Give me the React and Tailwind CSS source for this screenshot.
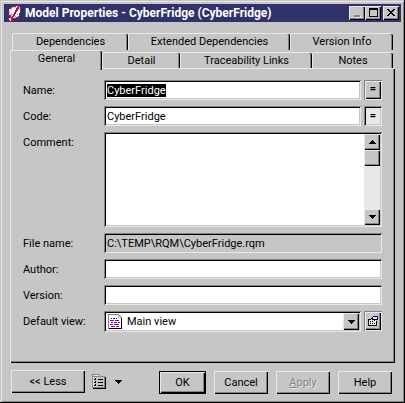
import {useEffect,useRef} from "react";

const raised = "bg-[#c6c6c6] shadow-[inset_1px_1px_#e8e8e8,inset_-1px_-1px_#000,inset_-2px_-2px_#848484]";
const sunken = "shadow-[inset_1px_1px_#848484,inset_-1px_-1px_#e8e8e8,inset_2px_2px_#000,inset_-2px_-2px_#c6c6c6]";
const tab = "border-t border-l border-[#e8e8e8] rounded-t-[2px] shadow-[inset_-1px_0_#000,inset_-2px_0_#848484] text-center";
const pushButton = "h-[23px] w-[54px] " + raised;

function QuillIcon(){
    return(
        <svg width="15" height="18" viewBox="0 0 15 18" shapeRendering="crispEdges" aria-hidden="true">
            <path d="M4 2h4V1h5v1h1v7h-1v3h-1v2h-2v1H5v-1H3v-2H1V5h1V4h1V3h1z" fill="#8c2050"/>
            <path d="M5 3h4V2h3v1h1v6h-1v3h-1v1H9v1H6v-1H4v-2H2V5h2V4h1z" fill="#d6ced6"/>
            <path d="M5 4h4v2H8v2H7v2H5V9H3V6h2zM11 6h2v3h-1v3h-1v1H8v-2h1V9h1z" fill="#fff"/>
            <path d="M12 1h1v2h-1v2h-1v2h-1v1H9v2H8v2H7v1H6v2H5v1H4v-2h1v-2h1v-2h1V8h1V6h1V4h1V3h1V2h1z" fill="#a5184a"/>
            <path d="M2 13h3v1h1v3H5v1H2v-1H1v-3h1z" fill="#a5184a"/>
            <path d="M2 14h2v2H2zM3 16h1v1H3z" fill="#f0d8e0"/>
            <path d="M2 8h1v1H2zM4 10h1v1H4zM10 10h1v1h-1zM8 12h1v1H8z" fill="#949494"/>
        </svg>
    );
}

function ViewIcon(){
    return(
        <svg width="15" height="16" viewBox="0 0 15 16" shapeRendering="crispEdges" aria-hidden="true">
            <path d="M0 0h11v1h1v1h1v1h1v12H0z" fill="#848484"/>
            <path d="M1 1h9v3h3v10H1z" fill="#fff"/>
            <path d="M10 1h1v1h1v1h1v1h-3z" fill="#c6c6c6"/>
            <path d="M13 4h1v11h-1zM1 14h13v1H1z" fill="#000"/>
            <path d="M3 4h1v1H3zM5 4h2v1H5zM8 4h1v1H8z" fill="#0000e0"/>
            <path d="M2 6h4v1H2zM7 6h4v1H7zM3 8h2v1H3zM6 8h3v1H6zM10 8h2v1h-2zM2 10h3v1H2zM6 10h5v1H6zM3 12h4v1H3zM8 12h3v1H8z" fill="#94009c"/>
        </svg>
    );
}

function PropertiesIcon(){
    return(
        <svg width="12" height="12" viewBox="0 0 12 12" shapeRendering="crispEdges" aria-hidden="true">
            <path d="M1 4h3v1H2v5h7V6h1v5H1z" fill="#000"/>
            <path d="M2 5h7v5H2z" fill="#e8e8e8"/>
            <path d="M3 6h1v1H3zM5 6h1v1H5zM3 8h1v1H3zM5 8h1v1H5zM7 8h1v1H7z" fill="#000"/>
            <path d="M5 2h1V1h4v1h1v3H8v1H7V5H5V4H4V3h1z" fill="#000"/>
            <path d="M6 2h4v2H6z" fill="#e8e8e8"/>
            <path d="M10 1h1v4h-1z" fill="#0000e0"/>
        </svg>
    );
}

function MenuIcon(){
    return(
        <svg width="14" height="15" viewBox="0 0 14 15" shapeRendering="crispEdges" aria-hidden="true">
            <path d="M0 0h7v1h1v1h5v12H0z" fill="#848484"/>
            <path d="M1 1h6v1H1zM1 3h11v10H1z" fill="#e8e8e8"/>
            <path d="M2 3h10v10H2z" fill="#c6c6c6"/>
            <path d="M13 3h1v12H1v-1h12z" fill="#000"/>
            <path d="M2 5h2v1H2zM3 4h1v1H3zM2 8h2v1H2zM3 7h1v1H3zM2 11h2v1H2zM3 10h1v1H3zM6 5h5v1H6zM6 8h5v1H6zM6 11h5v1H6z" fill="#000"/>
        </svg>
    );
}

function Arrow({up}){
    return(
        <svg width="7" height="4" viewBox="0 0 7 4" shapeRendering="crispEdges" aria-hidden="true">
            <path d={up ? "M3 0h1v1h1v1h1v1h1v1H0V3h1V2h1V1h1z" : "M0 0h7v1H6v1H5v1H4v1H3V3H2V2H1V1H0z"}/>
        </svg>
    );
}

function Field({label,id,children}){
    return(
        <div className="grid grid-cols-[81px_1fr]">
            <label htmlFor={id} className="mt-1 h-[14px]">{label}</label>
            <div className="flex gap-[3px]">{children}</div>
        </div>
    );
}

export default function App(){

    const nameRef = useRef(null);

    useEffect(()=>{
        nameRef.current.focus();
        nameRef.current.select();
    },[]);

    const input = "h-5 min-w-0 flex-1 px-[3px] outline-none selection:bg-black selection:text-white " + sunken;

    return(
        <div className="flex min-h-screen flex-col bg-[#c6c6c6] p-1 font-[Roboto,'Liberation_Sans',sans-serif] text-[11px] leading-[14px] text-black shadow-[inset_-1px_-1px_#000,inset_1px_1px_#c6c6c6,inset_2px_2px_#e8e8e8,inset_-2px_-2px_#848484]">

            {/* Title bar */}
            <div className="flex h-[18px] items-center bg-[#31316b] pr-[2px] pl-[3px] text-white">
                <QuillIcon/>
                <h1 className="ml-[3px] flex-1 truncate text-[12px] font-bold">Model Properties - CyberFridge (CyberFridge)</h1>
                <button aria-label="Minimize" disabled className={"flex h-[14px] w-4 items-end justify-center pb-[3px] "+raised}>
                    <span className="mr-px h-[2px] w-[6px] bg-[#848484] shadow-[1px_1px_#e8e8e8]"/>
                </button>
                <button aria-label="Maximize" className={"flex h-[14px] w-4 items-start justify-center pt-[2px] "+raised}>
                    <span className="h-[9px] w-[9px] border border-t-2 border-black"/>
                </button>
                <button aria-label="Close" className={"ml-[2px] flex h-[14px] w-4 items-start justify-center pt-[3px] "+raised}>
                    <svg width="8" height="7" viewBox="0 0 8 7" shapeRendering="crispEdges" aria-hidden="true">
                        <path d="M0 0h2v1h1v1h2V1h1V0h2v1H7v1H6v1H5v1h1v1h1v1h1v1H6V6H5V5H3v1H2v1H0V6h1V5h1V4h1V3H2V2H1V1H0z"/>
                    </svg>
                </button>
            </div>

            {/* Tabs */}
            <div role="tablist" className="mt-[11px] ml-[6px] mr-[6px]">
                <div className="mr-[2px] ml-[2px] grid h-[17px] grid-cols-[116fr_162fr_103fr]">
                    <button role="tab" className={tab}>Dependencies</button>
                    <button role="tab" className={tab}>Extended Dependencies</button>
                    <button role="tab" className={tab}>Version Info</button>
                </div>
                <div className="mr-[2px] grid h-[18px] grid-cols-[92fr_78fr_132fr_81fr] items-end">
                    <button role="tab" aria-selected="true" className={"relative -mb-px h-[20px] bg-[#c6c6c6] pb-[3px] "+tab}>General</button>
                    <button role="tab" className={"h-[17px] "+tab}>Detail</button>
                    <button role="tab" className={"h-[17px] "+tab}>Traceability Links</button>
                    <button role="tab" className={"h-[17px] "+tab}>Notes</button>
                </div>
            </div>

            {/* General page */}
            <div role="tabpanel" className="mx-[6px] flex flex-1 flex-col gap-[6px] pt-3 pr-[13px] pb-[30px] pl-[13px] shadow-[inset_1px_1px_#e8e8e8,inset_-1px_-1px_#000,inset_-2px_-2px_#848484]">

                <Field label="Name:" id="name">
                    <input id="name" ref={nameRef} defaultValue="CyberFridge" className={"bg-white "+input}/>
                    <button aria-label="Name equals code" className="h-5 w-[18px] bg-[#e8e8e8] p-px shadow-[inset_1px_1px_#848484]">
                        <span className={"block h-full pt-px font-bold "+raised}>=</span>
                    </button>
                </Field>

                <Field label="Code:" id="code">
                    <input id="code" defaultValue="CyberFridge" className={"bg-white "+input}/>
                    <button aria-label="Code equals name" aria-pressed="true" className={"h-5 w-[18px] bg-[#e8e8e8] font-bold "+sunken}>=</button>
                </Field>

                <Field label="Comment:" id="comment">
                    <div className={"flex h-[95px] flex-1 bg-white p-[2px] "+sunken}>
                        <textarea id="comment" className="min-w-0 flex-1 resize-none overflow-hidden px-px outline-none"/>
                        <div className="flex w-4 flex-col bg-[#e8e8e8]">
                            <button aria-label="Scroll up" className={"flex h-4 items-center justify-center "+raised}><Arrow up/></button>
                            <div className={"h-4 "+raised}/>
                            <button aria-label="Scroll down" className={"mt-auto flex h-4 items-center justify-center "+raised}><Arrow/></button>
                        </div>
                    </div>
                </Field>

                <Field label="File name:" id="file">
                    <input id="file" readOnly defaultValue="C:\TEMP\RQM\CyberFridge.rqm" className={"bg-[#c6c6c6] "+input}/>
                </Field>

                <Field label="Author:" id="author">
                    <input id="author" className={"bg-white "+input}/>
                </Field>

                <Field label="Version:" id="version">
                    <input id="version" className={"bg-white "+input}/>
                </Field>

                <Field label="Default view:" id="view">
                    <div className="relative flex-1">
                        <select id="view" className={"h-[21px] w-full appearance-none bg-white pl-[23px] outline-none "+sunken}>
                            <option>Main view</option>
                        </select>
                        <span className="pointer-events-none absolute top-[3px] left-1"><ViewIcon/></span>
                        <span className={"pointer-events-none absolute top-[2px] right-[2px] flex h-[17px] w-4 items-center justify-center "+raised}><Arrow/></span>
                    </div>
                    <button aria-label="View properties" className="h-5 w-[18px] bg-[#e8e8e8] p-px shadow-[inset_1px_1px_#848484]">
                        <span className={"flex h-full items-center justify-center "+raised}><PropertiesIcon/></span>
                    </button>
                </Field>

            </div>

            {/* Buttons */}
            <div className="mt-[7px] mr-[9px] mb-[5px] ml-[7px] flex items-start">
                <button className={"h-[23px] w-[74px] "+raised}>&lt;&lt; Less</button>
                <button aria-label="Menu" className="mt-[4px] ml-[7px] flex items-center gap-[9px]">
                    <MenuIcon/>
                    <Arrow/>
                </button>
                <div className="mt-px ml-auto flex gap-2">
                    <button className="h-[23px] w-[47px] border border-black bg-[#c6c6c6] shadow-[inset_1px_1px_#e8e8e8,inset_-1px_-1px_#000,inset_-2px_-2px_#848484]">OK</button>
                    <button className={pushButton}>Cancel</button>
                    <button disabled className={"text-[#848484] [text-shadow:1px_1px_#e8e8e8] "+pushButton}><u>A</u>pply</button>
                    <button className={pushButton}>Help</button>
                </div>
            </div>

        </div>
    );
}
